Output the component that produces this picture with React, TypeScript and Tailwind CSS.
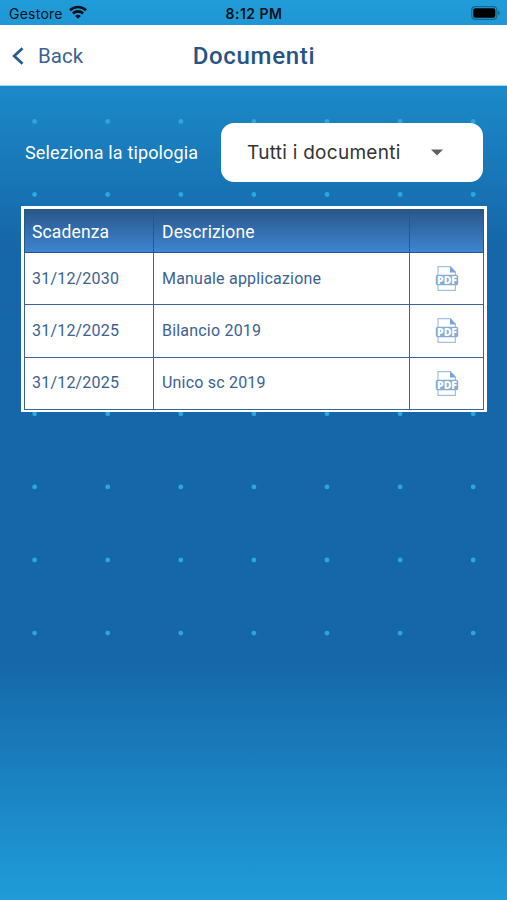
const DOCUMENTS = [
  { expiry: "31/12/2030", description: "Manuale applicazione" },
  { expiry: "31/12/2025", description: "Bilancio 2019" },
  { expiry: "31/12/2025", description: "Unico sc 2019" },
];

const DOT_COLS = [0, 1, 2, 3, 4, 5, 6];
const DOT_ROWS = [0, 1, 2, 3, 4, 5, 6, 7];

function DotPattern() {
  return (
    <svg className="absolute inset-0 h-full w-full" viewBox="0 0 507 900" fill="#2aa9e0">
      {DOT_ROWS.map((row) =>
        DOT_COLS.map((col) => (
          <circle key={`${row}-${col}`} cx={34.6 + col * 73.1} cy={121.4 + row * 73.1} r="2.4" />
        ))
      )}
    </svg>
  );
}

function WifiIcon() {
  return (
    <svg width="18" height="14" viewBox="0 0 18 14" fill="none" stroke="#03121c" strokeWidth="2.6" className="-mt-[3px]">
      <path d="M1 5.2C5.5.9 12.5.9 17 5.2" />
      <path d="M3.9 8.5c2.9-2.8 7.3-2.8 10.2 0" />
      <path d="M9 13.7 6.1 10.9c1.6-1.6 4.2-1.6 5.8 0z" fill="#03121c" stroke="none" />
    </svg>
  );
}

function BatteryIcon() {
  return (
    <svg width="30" height="14" viewBox="0 0 30 14" className="-mt-[2px]">
      <rect x="0.8" y="0.7" width="25" height="12.6" rx="3.5" fill="none" stroke="#12678f" strokeWidth="1.2" />
      <rect x="2.3" y="2.2" width="22" height="9.6" rx="2" fill="#000" />
      <path d="M27 4.7c2.3.6 2.3 4 0 4.6z" fill="#12678f" />
    </svg>
  );
}

function PdfIcon() {
  return (
    <svg width="24" height="27" viewBox="0 0 24 27">
      <path d="M3 10V1.6h12.4L20.4 7v3M3 19v6.3h17.4V19" fill="none" stroke="#a3c1e2" strokeWidth="1.2" />
      <path d="M15 1.2 20.9 7.6H15z" fill="#78a2d0" />
      <rect x="0.8" y="9.7" width="22.4" height="10.6" rx="1.8" fill="#83acd9" />
      <text
        x="12"
        y="18.8"
        textAnchor="middle"
        textLength="20"
        lengthAdjust="spacingAndGlyphs"
        className="font-['Open_Sans',sans-serif] text-[11px] font-extrabold"
        fill="#fff"
      >
        PDF
      </text>
    </svg>
  );
}

export default function App() {
  return (
    <div className="relative h-[900px] w-full overflow-hidden bg-[linear-gradient(180deg,#209cd9_0px,#1567a9_245px,#1567a9_660px,#209cd9_900px)] font-['Roboto',sans-serif]">
      <DotPattern />

      <div className="relative flex h-full flex-col">
        {/* Status bar */}
        <div className="grid h-[25px] shrink-0 grid-cols-[1fr_auto_1fr] items-center pt-[2px] pl-[9px] pr-[8px] font-['Inter',sans-serif] text-[#03121c]">
          <div className="flex items-center gap-[6px]">
            <span className="text-[14px] tracking-[0.25px]">Gestore</span>
            <WifiIcon />
          </div>
          <span className="text-[14px] font-semibold tracking-[0.5px]">8:12 PM</span>
          <div className="-mr-[2px] flex justify-end">
            <BatteryIcon />
          </div>
        </div>

        {/* Header */}
        <header className="grid h-[61px] shrink-0 grid-cols-[1fr_auto_1fr] items-center border-b border-[#a5dcf0] bg-white pt-[2px] text-[#265486]">
          <button className="flex items-center gap-[14px] pl-[12px] text-[#3b6291]">
            <svg width="12" height="18" viewBox="0 0 12 18" fill="none" stroke="#2a5a90" strokeWidth="2.8">
              <path d="M10.5 1.2 2.2 9l8.3 7.8" />
            </svg>
            <span className="text-[20.5px]">Back</span>
          </button>
          <h1 className="pl-px text-[24px] font-medium tracking-[0.7px]">Documenti</h1>
        </header>

        {/* Type filter */}
        <div className="mt-[37px] flex h-[59px] shrink-0 items-center justify-between pl-[25px] pr-[24px]">
          <label className="text-[18px] tracking-[0.14px] text-white">Seleziona la tipologia</label>
          <button className="flex h-full w-[262px] items-center justify-between rounded-[13px] bg-white pl-[26px] pr-[40px] font-['Inter',sans-serif] text-[19px] text-[#333]">
            <span className="pt-[2px] tracking-[0.28px]">Tutti i documenti</span>
            <svg width="12" height="7" viewBox="0 0 12 7" fill="#616161">
              <path d="M0 .5h12L6 6.5z" />
            </svg>
          </button>
        </div>

        {/* Documents table */}
        <div className="mt-6 ml-[21px] h-[206px] w-[466px] shrink-0 border-[3px] border-b-2 border-white bg-white">
          <table className="w-full table-fixed border-collapse text-left text-[#3b6291]">
            <colgroup>
              <col className="w-[129px]" />
              <col className="w-[256px]" />
              <col />
            </colgroup>
            <thead>
              <tr className="h-[43px] bg-linear-to-b from-[#28588b] to-[#3f86d2] text-[17.5px] text-white">
                <th className="border border-[#2a5688] px-[7px] pt-[2px] font-normal tracking-[0.15px]">Scadenza</th>
                <th className="border border-[#2a5688] px-2 pt-[2px] font-normal tracking-[0.15px]">Descrizione</th>
                <th className="border border-[#2a5688]" />
              </tr>
            </thead>
            <tbody>
              {DOCUMENTS.map((doc) => (
                <tr key={doc.description} className="h-[52.33px] text-[16px]">
                  <td className="border border-[#3c6496] px-[7px] tracking-[0.2px]">{doc.expiry}</td>
                  <td className="border border-[#3c6496] px-2 tracking-[0.2px]">{doc.description}</td>
                  <td className="border border-[#3c6496]">
                    <div className="flex justify-center">
                      <PdfIcon />
                    </div>
                  </td>
                </tr>
              ))}
            </tbody>
          </table>
        </div>
      </div>
    </div>
  );
}
